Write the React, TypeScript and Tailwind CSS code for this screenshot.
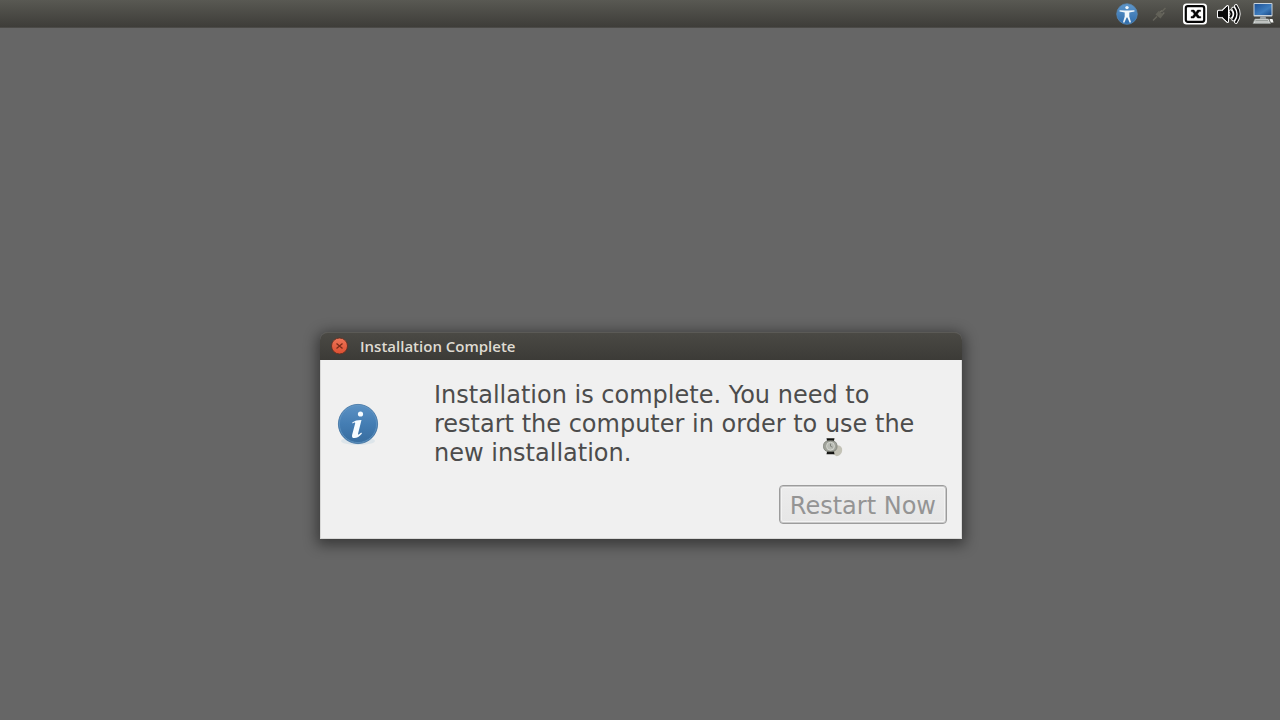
function AccessibilityIcon() {
  return (
    <svg viewBox="0 0 22 22" className="size-[22px]" aria-hidden="true">
      <defs>
        <linearGradient id="accessBlue" x1="0" y1="0" x2="0" y2="1">
          <stop offset="0" stopColor="#5f97cb" />
          <stop offset="1" stopColor="#2f6cab" />
        </linearGradient>
      </defs>
      <circle cx="11" cy="11" r="10.3" fill="url(#accessBlue)" stroke="#5687b3" strokeWidth="0.8" />
      <circle cx="11" cy="4.6" r="1.7" fill="#f1f7fb" />
      <path
        d="M3.6 7.2 9 7.5h4l5.4-.3.1 1.2-5.2 1v4l1.7 5.8-1.3.5-2.300-5.200h-.8l-2.300 5.200-1.300-.5 1.700-5.800v-4l-5.200-1z"
        fill="#f1f7fb"
      />
    </svg>
  );
}

function PlugIcon() {
  return (
    <svg viewBox="0 0 18 18" className="size-[18px]" aria-hidden="true">
      <path d="M3 15.5 7 11.5M11.5 7 15.5 3" stroke="#65645b" strokeWidth="1.4" />
      <path d="m5.5 9.5 5 4 2.8-3.7-4.500-4z" fill="#626158" />
      <path d="m10 7 2-1.6M12.5 9.5l1.8-2" stroke="#6d6c63" strokeWidth="1.2" />
    </svg>
  );
}

function KeyboardIcon() {
  return (
    <svg viewBox="0 0 26 24" className="h-6 w-[26px]" aria-hidden="true">
      <rect x="1" y="1.5" width="24" height="21" rx="3.5" fill="#fff" />
      <rect x="3.8" y="4.2" width="18.4" height="15.6" rx="2" fill="#fff" stroke="#050505" strokeWidth="2.2" />
      <path
        d="M9.300 8h2.700l1.800 2.400L15.500 8h3.100v1.600h-1.300L15.500 12l2 2.500h1.300v1.600h-3.200l-1.800-2.300-1.900 2.300H9v-1.600h1.300L12.200 12l-1.900-2.400H9.300z"
        fill="#050505"
        stroke="#050505"
        strokeWidth="0.4"
      />
    </svg>
  );
}

function VolumeIcon() {
  return (
    <svg viewBox="0 0 25 24" className="h-6 w-[25px]" aria-hidden="true">
      <g fill="none" stroke="#fff" strokeLinecap="round" strokeLinejoin="round">
        <path d="M2.5 9.3h4L11.500 4.500v15L6.500 14.700h-4z" strokeWidth="3" fill="#fff" />
        <path d="M14.500 9.300q2 2.700 0 5.400M17.300 6.600q4 5.400 0 10.800M20 4q5.400 8 0 16" strokeWidth="3.8" />
      </g>
      <path d="M2.500 9.300h4L11.500 4.500v15L6.500 14.700h-4z" fill="#090909" stroke="#090909" strokeWidth="1" />
      <path
        d="M14.500 9.300q2 2.700 0 5.400M17.300 6.600q4 5.400 0 10.800M20 4q5.400 8 0 16"
        fill="none"
        stroke="#090909"
        strokeWidth="2"
        strokeLinecap="round"
      />
    </svg>
  );
}

function ComputerIcon() {
  return (
    <svg viewBox="0 0 22 23" className="h-[23px] w-[22px]" aria-hidden="true">
      <defs>
        <linearGradient id="screenBlue" x1="0" y1="0" x2="1" y2="1">
          <stop offset="0" stopColor="#1d5298" />
          <stop offset="0.6" stopColor="#3f7dbd" />
          <stop offset="1" stopColor="#194a88" />
        </linearGradient>
      </defs>
      <rect x="1.500" y="1" width="19" height="13.5" rx="1" fill="#c9d3dc" />
      <rect x="2.500" y="2" width="17" height="11" fill="url(#screenBlue)" />
      <path d="M8.500 14.500h5l.8 2.500H7.700z" fill="#9fa5a8" />
      <path d="M3 17h13.500l2 4.500H1z" fill="#e4e7e5" stroke="#8d9290" strokeWidth="0.7" />
      <path d="M3.300 18.500h12.700M2.800 20h14" stroke="#858b88" strokeWidth="0.8" />
      <path d="M17.500 17h3l1 3.500h-2.700z" fill="#f2f4f2" />
    </svg>
  );
}

function CloseIcon() {
  return (
    <svg viewBox="0 0 18 18" className="size-[18px]" aria-hidden="true">
      <defs>
        <linearGradient id="closeRed" x1="0" y1="0" x2="0" y2="1">
          <stop offset="0" stopColor="#ee7558" />
          <stop offset="1" stopColor="#dc4f31" />
        </linearGradient>
      </defs>
      <circle cx="9.500" cy="9" r="8" fill="url(#closeRed)" stroke="#5b3023" strokeWidth="0.9" />
      <path d="m6.500 6.500 6 5M12.500 6.500l-6 5" stroke="#7a2c19" strokeWidth="1.3" />
    </svg>
  );
}

function InfoIcon() {
  return (
    <svg viewBox="0 1 44 44" className="size-11" aria-hidden="true">
      <defs>
        <linearGradient id="infoBlue" x1="0" y1="0" x2="0" y2="1">
          <stop offset="0" stopColor="#5c92c4" />
          <stop offset="0.5" stopColor="#447db3" />
          <stop offset="1" stopColor="#376c9e" />
        </linearGradient>
      </defs>
      <ellipse cx="22" cy="39" rx="17" ry="4" fill="#dde5ea" />
      <circle cx="22" cy="22" r="19.6" fill="url(#infoBlue)" stroke="#3b6f9f" strokeWidth="0.8" />
      <circle cx="22" cy="22" r="18.6" fill="none" stroke="#6599c5" strokeWidth="0.7" />
      <circle cx="24.5" cy="12" r="2.6" fill="#f6fcff" />
      <path
        d="M16.200 20.400c2.500-1.800 5.500-2.600 9.300-2.500l-3.400 13.500c-.3 1.300.2 1.500 1 .9l2.100-1.800.8 1c-2.600 3.100-5 4.600-7.500 4.600-2.300 0-2.900-1.400-2.300-3.700l3-11.200c.2-.7-.3-.9-1-.6l-1.600.8z"
        fill="#f6fcff"
      />
    </svg>
  );
}

function BusyCursor() {
  return (
    <svg viewBox="0 0 22 22" className="pointer-events-none absolute top-[77px] left-[501px] size-[22px]" aria-hidden="true">
      <path d="M10 11c3.500-3.700 8.500-3.500 10 .5 1 4-2 7.500-5.500 7.700l-4-2.500z" fill="#c3c2b6" />
      <path d="M4.500 1.300h8l-.8 4H5.300zM4.500 17.200h8l-.8-4H5.300z" fill="#141411" />
      <rect x="1.500" y="3.800" width="13.500" height="10.800" rx="4.800" fill="#a0a39b" stroke="#7d8077" strokeWidth="0.8" />
      <circle cx="8.500" cy="9.200" r="4" fill="#b9bcb5" stroke="#dfe1da" strokeWidth="0.7" />
      <path d="M8.500 6.700v2.500l2 1" fill="none" stroke="#777a73" strokeWidth="0.9" />
    </svg>
  );
}

export default function App() {
  return (
    <div className="flex min-h-screen flex-col bg-[#666666]">
      <header className="flex h-7 items-center justify-end border-b border-[#4b4a47] bg-linear-to-b from-[#595953] to-[#3e3d39] pr-1.5">
        <button type="button" aria-label="Universal access" className="mr-3">
          <AccessibilityIcon />
        </button>
        <button type="button" aria-label="Power" className="mr-3.5">
          <PlugIcon />
        </button>
        <button type="button" aria-label="Keyboard layout" className="mr-2">
          <KeyboardIcon />
        </button>
        <button type="button" aria-label="Volume" className="mr-[11px]">
          <VolumeIcon />
        </button>
        <button type="button" aria-label="Session">
          <ComputerIcon />
        </button>
      </header>

      <main className="flex flex-1 items-start justify-center pt-[304px] pl-0.5">
        <section
          role="dialog"
          aria-labelledby="dialog-title"
          aria-describedby="dialog-message"
          className="w-[642px] max-w-full rounded-t-lg shadow-[0_3px_14px_3px_rgba(0,0,0,0.45)]"
        >
          <div className="flex h-7 items-center gap-3 rounded-t-lg border-t border-[#5b5a56] bg-linear-to-b from-[#4a4944] to-[#3c3b37] pb-px pl-2.5">
            <button type="button" aria-label="Close">
              <CloseIcon />
            </button>
            <h1
              id="dialog-title"
              className="font-['Open_Sans','Noto_Sans',sans-serif] text-[15px] leading-5 font-semibold text-[#dfdbd2]"
            >
              Installation Complete
            </h1>
          </div>

          <div className="relative border border-t-0 border-[#d8d8d7] bg-[#f0f0f0] pt-[21px] pr-3.5 pb-3.5 pl-[15px] font-['DejaVu_Sans',sans-serif] text-2xl leading-[29px]">
            <div className="flex items-center gap-[54px]">
              <div className="shrink-0">
                <InfoIcon />
              </div>
              <p id="dialog-message" className="max-w-[500px] text-[#4c4c4c]">
                Installation is complete. You need to restart the computer in order to use the new installation.
              </p>
            </div>
            <div className="mt-[17px] flex justify-end">
              <button
                type="button"
                disabled
                className="h-[39px] rounded border border-[#9c9c9c] bg-linear-to-b from-[#ececec] to-[#e6e6e6] px-2.5 pt-1 text-[#949494] shadow-[inset_0_0_0_1px_#c9c9c9,inset_0_0_0_2px_#f3f3f3]"
              >
                Restart Now
              </button>
            </div>
            <BusyCursor />
          </div>
        </section>
      </main>
    </div>
  );
}
